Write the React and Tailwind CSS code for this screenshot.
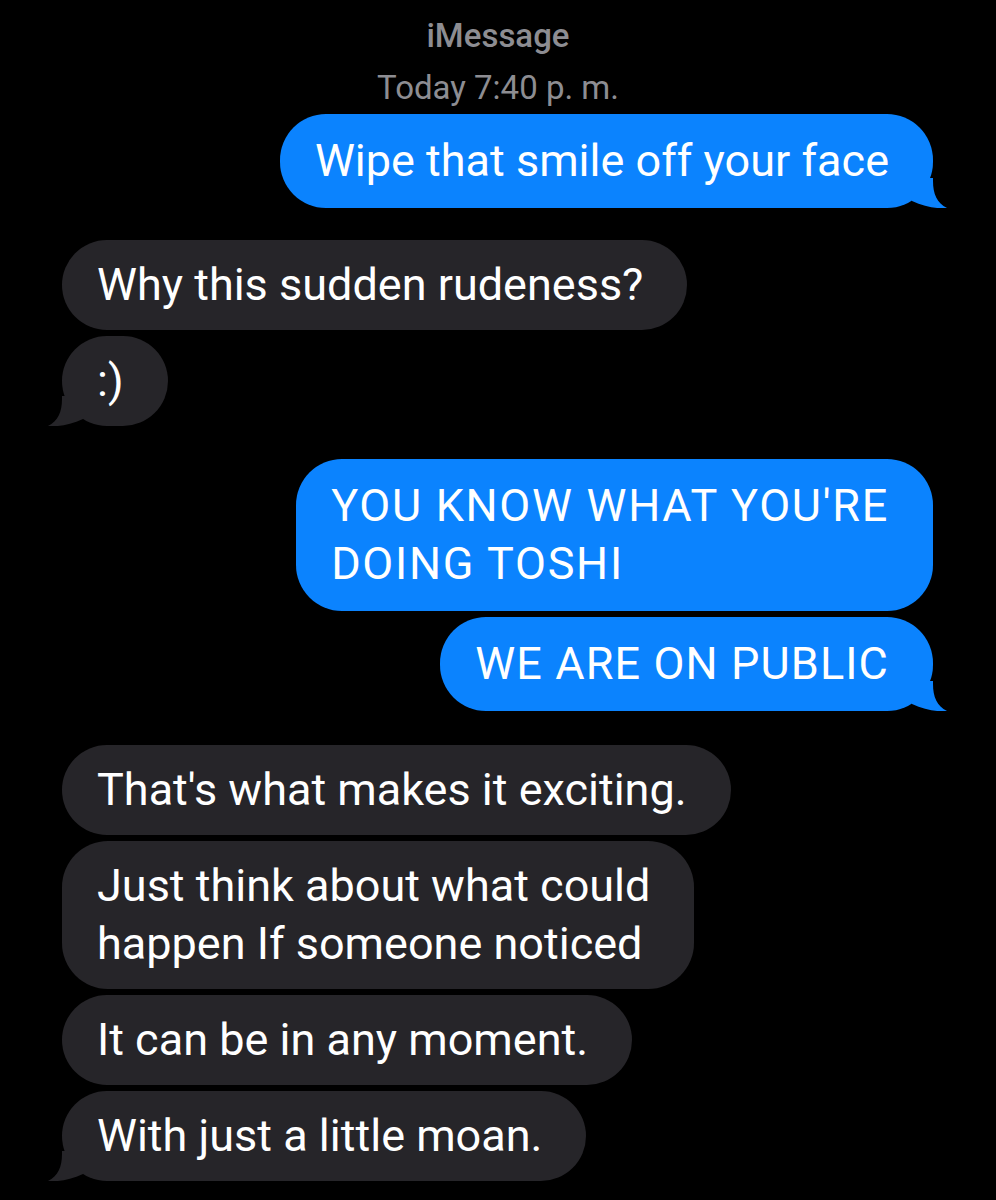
import React from 'react';

const Tail = ({ side, color }) => (
  <svg
    width="36"
    height="30"
    viewBox="0 0 36 30"
    className={`absolute bottom-0 ${side === 'right' ? 'right-[-14px]' : 'left-[-14px] scale-x-[-1]'}`}
  >
    <path d="M22 0 L22 3 C22 16 26 25 36 30 C27 31 14 29 1 23 L1 0 Z" fill={color} />
  </svg>
);

const Bubble = ({ from, tail, className = '', children }) => {
  const mine = from === 'me';
  return (
    <div className={`flex ${mine ? 'justify-end' : 'justify-start'}`}>
      <div
        className={`relative rounded-[46px] pl-[35px] pr-[44px] text-[45px] leading-[58px] text-white ${
          mine ? 'bg-[#0b83fe] py-[18px]' : 'bg-[#262529] py-[16px]'
        } ${className}`}
      >
        {children}
        {tail && <Tail side={mine ? 'right' : 'left'} color={mine ? '#0b83fe' : '#262529'} />}
      </div>
    </div>
  );
};

export default function App() {
  return (
    <div className="w-[996px] h-[1200px] overflow-hidden bg-black font-['Roboto',sans-serif]">
      <div className="flex flex-col items-center pt-[18px] text-[#8d8d92] text-[33px] leading-[36px]">
        <div className="font-medium">iMessage</div>
        <div className="mt-[16px]">Today 7:40 p. m.</div>
      </div>

      <div className="flex flex-col pl-[62px] pr-[63px] pt-[8px]">
        <Bubble from="me" tail>Wipe that smile off your face</Bubble>

        <div className="flex flex-col gap-[6px] mt-[32px]">
          <Bubble from="them">Why this sudden rudeness?</Bubble>
          <Bubble from="them" tail>:)</Bubble>
        </div>

        <div className="flex flex-col gap-[6px] mt-[33px]">
          <Bubble from="me" className="tracking-[1.7px]">
            YOU KNOW WHAT YOU'RE
            <br />
            DOING TOSHI
          </Bubble>
          <Bubble from="me" tail className="tracking-[1.1px]">WE ARE ON PUBLIC</Bubble>
        </div>

        <div className="flex flex-col gap-[6px] mt-[34px]">
          <Bubble from="them">That's what makes it exciting.</Bubble>
          <Bubble from="them">
            Just think about what could
            <br />
            happen If someone noticed
          </Bubble>
          <Bubble from="them">It can be in any moment.</Bubble>
          <Bubble from="them" tail>With just a little moan.</Bubble>
        </div>
      </div>
    </div>
  );
}
